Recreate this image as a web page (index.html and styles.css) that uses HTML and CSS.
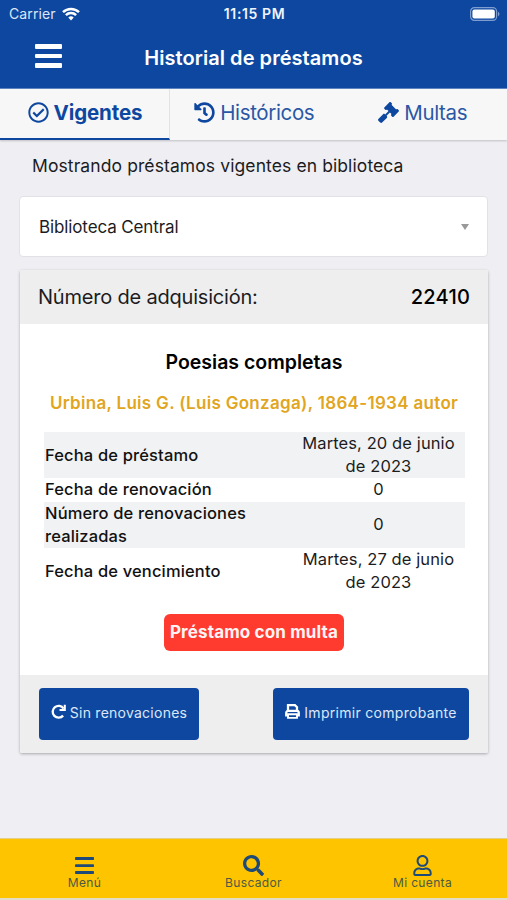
FILE: index.html
```html
<!DOCTYPE html>
<html lang="es">
	<head>
		<meta charset="utf-8">
		<title>Historial de préstamos</title>
		<link rel="stylesheet" href="styles.css">
	</head>
	<body>
		<header class="header">
			<div class="status-bar">
				<div class="carrier">
					<span>Carrier</span>
					<svg class="wifi" viewBox="0 0 18 14" fill="none" stroke="currentColor" stroke-width="2.5">
						<path d="M1 5.2a11.4 11.4 0 0 1 16 0"/>
						<path d="M3.9 8.2a7.3 7.3 0 0 1 10.2 0"/>
						<path d="M9 13.4l-2.7-2.8a3.9 3.9 0 0 1 5.4 0z" fill="currentColor" stroke="none"/>
					</svg>
				</div>
				<span class="clock">11:15 PM</span>
				<svg class="battery" viewBox="0 0 30 14">
					<rect x=".6" y=".6" width="26" height="12.8" rx="3.8" fill="none" stroke="#7f9dd0" stroke-width="1.2"/>
					<rect x="2.4" y="2.4" width="22.4" height="9.2" rx="2" fill="#fff"/>
					<path d="M28 4.8c2 .8 2 3.6 0 4.4z" fill="#7f9dd0"/>
				</svg>
			</div>
			<div class="title-bar">
				<div class="menu-button"><span></span><span></span><span></span></div>
				<h1>Historial de préstamos</h1>
			</div>
		</header>

		<nav class="tabs">
			<a class="tab active">
				<svg viewBox="0 0 512 512"><path d="M256 8C119.033 8 8 119.033 8 256s111.033 248 248 248 248-111.033 248-248S392.967 8 256 8zm0 48c110.532 0 200 89.451 200 200 0 110.532-89.451 200-200 200-110.532 0-200-89.451-200-200 0-110.532 89.451-200 200-200m140.204 130.267l-22.536-22.718c-4.667-4.705-12.265-4.736-16.97-.068L215.346 303.697l-59.792-60.277c-4.667-4.705-12.265-4.736-16.97-.069l-22.719 22.536c-4.705 4.667-4.736 12.265-.068 16.971l90.781 91.516c4.667 4.705 12.265 4.736 16.97.068l172.589-171.204c4.704-4.668 4.734-12.266.067-16.971z"/></svg>
				<span>Vigentes</span>
			</a>
			<a class="tab">
				<svg viewBox="0 0 512 512"><path d="M504 255.531c.253 136.64-111.18 248.372-247.82 248.468-59.015.042-113.223-20.53-155.822-54.911-11.077-8.94-11.905-25.541-1.839-35.607l11.267-11.267c8.609-8.609 22.353-9.551 31.891-1.984C173.062 425.135 212.781 440 256 440c101.705 0 184-82.311 184-184 0-101.705-82.311-184-184-184-48.814 0-93.149 18.969-126.068 49.932l50.754 50.754c10.08 10.08 2.941 27.314-11.313 27.314H24c-8.837 0-16-7.163-16-16V38.627c0-14.254 17.234-21.393 27.314-11.314l49.372 49.372C129.209 34.136 189.552 8 256 8c136.81 0 247.747 110.78 248 247.531zm-180.912 78.784l9.823-12.63c8.138-10.463 6.253-25.542-4.21-33.679L288 256.349V152c0-13.255-10.745-24-24-24h-16c-13.255 0-24 10.745-24 24v135.651l65.409 50.874c10.463 8.137 25.541 6.253 33.679-4.21z"/></svg>
				<span>Históricos</span>
			</a>
			<a class="tab">
				<svg viewBox="0 0 512 512"><path d="M504.971 199.362l-22.627-22.627c-9.373-9.373-24.569-9.373-33.941 0l-5.657 5.657L329.608 69.255l5.657-5.657c9.373-9.373 9.373-24.569 0-33.941L312.638 7.029c-9.373-9.373-24.569-9.373-33.941 0L154.246 131.48c-9.373 9.373-9.373 24.569 0 33.941l22.627 22.627c9.373 9.373 24.569 9.373 33.941 0l5.657-5.657 39.598 39.598-81.04 81.04-5.657-5.657c-12.497-12.497-32.758-12.497-45.255 0L9.373 412.118c-12.497 12.497-12.497 32.758 0 45.255l45.255 45.255c12.497 12.497 32.758 12.497 45.255 0l114.745-114.745c12.497-12.497 12.497-32.758 0-45.255l-5.657-5.657 81.04-81.04 39.598 39.598-5.657 5.657c-9.373 9.373-9.373 24.569 0 33.941l22.627 22.627c9.373 9.373 24.569 9.373 33.941 0l124.451-124.451c9.372-9.372 9.372-24.568 0-33.941z"/></svg>
				<span>Multas</span>
			</a>
		</nav>

		<main class="content">
			<p class="intro">Mostrando préstamos vigentes en biblioteca</p>
			<div class="select">
				<span>Biblioteca Central</span>
				<i class="caret"></i>
			</div>

			<section class="card">
				<div class="card-header">
					<span class="label">Número de adquisición:</span>
					<span class="number">22410</span>
				</div>
				<div class="card-body">
					<h2>Poesias completas</h2>
					<h3>Urbina, Luis G. (Luis Gonzaga), 1864-1934 autor</h3>
					<table class="loan">
						<tr><th>Fecha de préstamo</th><td>Martes, 20 de junio<br>de 2023</td></tr>
						<tr><th>Fecha de renovación</th><td>0</td></tr>
						<tr><th>Número de renovaciones<br>realizadas</th><td>0</td></tr>
						<tr><th>Fecha de vencimiento</th><td>Martes, 27 de junio<br>de 2023</td></tr>
					</table>
					<span class="fine">Préstamo con multa</span>
				</div>
				<div class="card-footer">
					<button class="btn renew">
						<svg viewBox="0 0 16 16" fill="none" stroke="currentColor" stroke-width="2.5">
							<path d="M12.9 12.4A6.3 6.3 0 1 1 13.4 4.9"/>
							<path d="M14.7 .8v5.6H9.1" stroke-width="2.2"/>
						</svg>
						<span>Sin renovaciones</span>
					</button>
					<button class="btn print">
						<svg viewBox="0 0 16 16" fill="none" stroke="currentColor" stroke-width="2.4">
							<path d="M3.2 7.5V1.3h7.4l2.2 2.2v4"/>
							<path d="M3 12H1.3V9.4a2 2 0 0 1 2-2h9.4a2 2 0 0 1 2 2V12H13"/>
							<path d="M3.2 10.9h9.6v3.9H3.2z" stroke-width="2"/>
						</svg>
						<span>Imprimir comprobante</span>
					</button>
				</div>
			</section>
		</main>

		<nav class="bottom-nav">
			<a>
				<svg viewBox="0 0 20 20"><rect x="1" y="2" width="18" height="2.8" rx=".6"/><rect x="1" y="8.7" width="18" height="2.8" rx=".6"/><rect x="1" y="15.2" width="18" height="2.8" rx=".6"/></svg>
				<span>Menú</span>
			</a>
			<a>
				<svg viewBox="0 0 512 512"><path d="M505 442.7L405.3 343c-4.5-4.5-10.6-7-17-7H372c27.6-35.3 44-79.7 44-128C416 93.1 322.9 0 208 0S0 93.1 0 208s93.1 208 208 208c48.3 0 92.7-16.4 128-44v16.3c0 6.4 2.5 12.5 7 17l99.7 99.7c9.4 9.4 24.6 9.4 33.9 0l28.3-28.3c9.4-9.4 9.4-24.6.1-34zM208 336c-70.7 0-128-57.2-128-128 0-70.7 57.2-128 128-128 70.7 0 128 57.2 128 128 0 70.7-57.2 128-128 128z"/></svg>
				<span>Buscador</span>
			</a>
			<a>
				<svg viewBox="0 0 448 512"><path d="M313.6 304c-28.7 0-42.5 16-89.6 16-47.1 0-60.8-16-89.6-16C60.2 304 0 364.2 0 438.4V464c0 26.5 21.5 48 48 48h352c26.5 0 48-21.5 48-48v-25.6c0-74.2-60.2-134.4-134.4-134.4zM400 464H48v-25.6c0-47.6 38.8-86.4 86.4-86.4 14.6 0 38.3 16 89.6 16 51.7 0 74.9-16 89.6-16 47.6 0 86.4 38.8 86.4 86.4V464zM224 288c79.5 0 144-64.5 144-144S303.5 0 224 0 80 64.5 80 144s64.5 144 144 144zm0-240c52.9 0 96 43.1 96 96s-43.1 96-96 96-96-43.1-96-96 43.1-96 96-96z"/></svg>
				<span>Mi cuenta</span>
			</a>
		</nav>
	</body>
</html>
```
FILE: styles.css
```css
* {
	box-sizing: border-box;
}

body {
	margin: 0;
	height: 900px;
	display: flex;
	flex-direction: column;
	background-color: #efeef3;
	color: #1c1c1e;
	font-family: Inter, "Liberation Sans", sans-serif;
	overflow: hidden;
}

h1, h2, h3, p {
	margin: 0;
}

.header {
	height: 89px;
	background-color: #0e479f;
	border-bottom: 1px solid #5f86c2;
	color: #ffffff;
}

.status-bar {
	height: 27px;
	padding: 0 7px 0 9px;
	display: grid;
	grid-template-columns: 1fr auto 1fr;
	align-items: center;
	font-size: 14px;
}

.carrier {
	display: flex;
	align-items: center;
	gap: 6px;
	color: #dbe6f8;
	letter-spacing: 0.1px;
}

.wifi {
	width: 18px;
	height: 14px;
	color: #ffffff;
}

.clock {
	font-weight: 600;
	font-size: 14px;
	letter-spacing: 0.6px;
	color: #eef3fc;
}

.battery {
	width: 30px;
	height: 14px;
	justify-self: end;
}

.title-bar {
	height: 61px;
	padding: 0 35px;
	display: grid;
	grid-template-columns: 27px 1fr 27px;
	align-items: center;
}

.menu-button {
	display: grid;
	gap: 5px;
	padding-bottom: 3px;
}

.menu-button span {
	height: 4.6px;
	border-radius: 1px;
	background-color: #ffffff;
}

h1 {
	text-align: center;
	font-size: 20px;
	font-weight: 600;
	letter-spacing: 0.05px;
	line-height: 24px;
}

.tabs {
	height: 51px;
	display: grid;
	grid-template-columns: 170px 1fr 1fr;
	background-color: #f7f7f7;
	box-shadow: 0 1px 2px rgba(0, 0, 0, 0.2);
}

.tab {
	display: flex;
	align-items: center;
	justify-content: center;
	gap: 5px;
	padding-bottom: 3px;
	border-bottom: 2px solid transparent;
	color: #2a57a5;
	font-size: 20.5px;
	letter-spacing: -0.35px;
}

.tab svg {
	width: 21px;
	height: 21px;
	fill: #0e479f;
}

.tab.active {
	padding-left: 1px;
	border-bottom-color: #0e479f;
	border-right: 1px solid #e3e3e5;
	color: #0e479f;
	font-weight: 700;
	letter-spacing: -0.1px;
}

.content {
	flex: 1;
	padding: 14px 19px 0;
}

.intro {
	padding-left: 13px;
	font-size: 17.5px;
	letter-spacing: 0.1px;
	line-height: 24px;
}

.select {
	height: 61px;
	margin-top: 18px;
	padding: 0 18px 0 19px;
	display: flex;
	align-items: center;
	justify-content: space-between;
	border: 1px solid #e2e2e6;
	border-radius: 4px;
	background-color: #ffffff;
	font-size: 17px;
	letter-spacing: -0.12px;
}

.caret {
	border: 4.5px solid transparent;
	border-top: 6px solid #999999;
	border-bottom: 0;
}

.card {
	margin: 13px 0 0 1px;
	border-radius: 2px;
	background-color: #ffffff;
	box-shadow: 0 1px 3px rgba(0, 0, 0, 0.3);
}

.card-header {
	height: 54px;
	padding: 0 18px;
	display: flex;
	align-items: center;
	justify-content: space-between;
	background-color: #eeeeee;
	font-size: 20px;
	letter-spacing: -0.2px;
}

.number {
	font-weight: 500;
	letter-spacing: 0.2px;
	color: #000000;
}

.card-body {
	height: 351px;
	padding: 26px 24px 0;
	display: flex;
	flex-direction: column;
	align-items: center;
}

h2 {
	color: #000000;
	font-size: 19.5px;
	font-weight: 600;
	line-height: 24px;
}

h3 {
	margin-top: 18px;
	color: #e1a51e;
	font-size: 17px;
	font-weight: 600;
	letter-spacing: 0.31px;
	line-height: 22px;
	white-space: nowrap;
}

.loan {
	width: 421px;
	margin-top: 18px;
	border-collapse: collapse;
	table-layout: fixed;
	font-size: 16.5px;
	letter-spacing: 0.1px;
	line-height: 23.2px;
}

.loan tr:nth-child(odd) {
	background-color: #f0f2f3;
}

.loan th {
	width: 249px;
	padding: 0 0 0 1.5px;
	text-align: left;
	font-weight: 500;
	letter-spacing: 0.15px;
	color: #111111;
	white-space: nowrap;
}

.loan td {
	padding: 0;
	text-align: center;
	white-space: nowrap;
}

.fine {
	margin-top: 20px;
	width: 180px;
	height: 37px;
	border-radius: 6px;
	background-color: #ff3b30;
	color: #fff4f3;
	font-size: 17px;
	font-weight: 700;
	letter-spacing: 0.15px;
	line-height: 37px;
	text-align: center;
	white-space: nowrap;
}

.card-footer {
	height: 78px;
	padding: 13px 19px;
	display: flex;
	justify-content: space-between;
	background-color: #eeeeee;
	border-radius: 0 0 2px 2px;
}

.btn {
	height: 52px;
	padding: 0 0 3px;
	display: flex;
	align-items: center;
	justify-content: center;
	gap: 4px;
	border: 0;
	border-radius: 4px;
	background-color: #0e479f;
	color: #dce7f9;
	font-family: inherit;
	font-size: 14px;
	letter-spacing: 0.25px;
	white-space: nowrap;
}

.btn svg {
	width: 15px;
	height: 15px;
	margin-bottom: 3px;
	color: #ffffff;
}

.renew {
	width: 160px;
}

.print {
	width: 196px;
	letter-spacing: 0.3px;
}

.bottom-nav {
	height: 62px;
	display: grid;
	grid-template-columns: repeat(3, 1fr);
	background-color: #ffc400;
	border-top: 1px solid #e3cf8a;
	border-bottom: 2px solid #e2dcc8;
}

.bottom-nav a {
	padding-top: 16px;
	display: flex;
	flex-direction: column;
	align-items: center;
	color: #4a5a45;
	font-size: 12px;
	line-height: 14px;
	letter-spacing: 0.35px;
}

.bottom-nav svg {
	width: 21px;
	height: 21px;
	fill: #1d4a78;
}
```
